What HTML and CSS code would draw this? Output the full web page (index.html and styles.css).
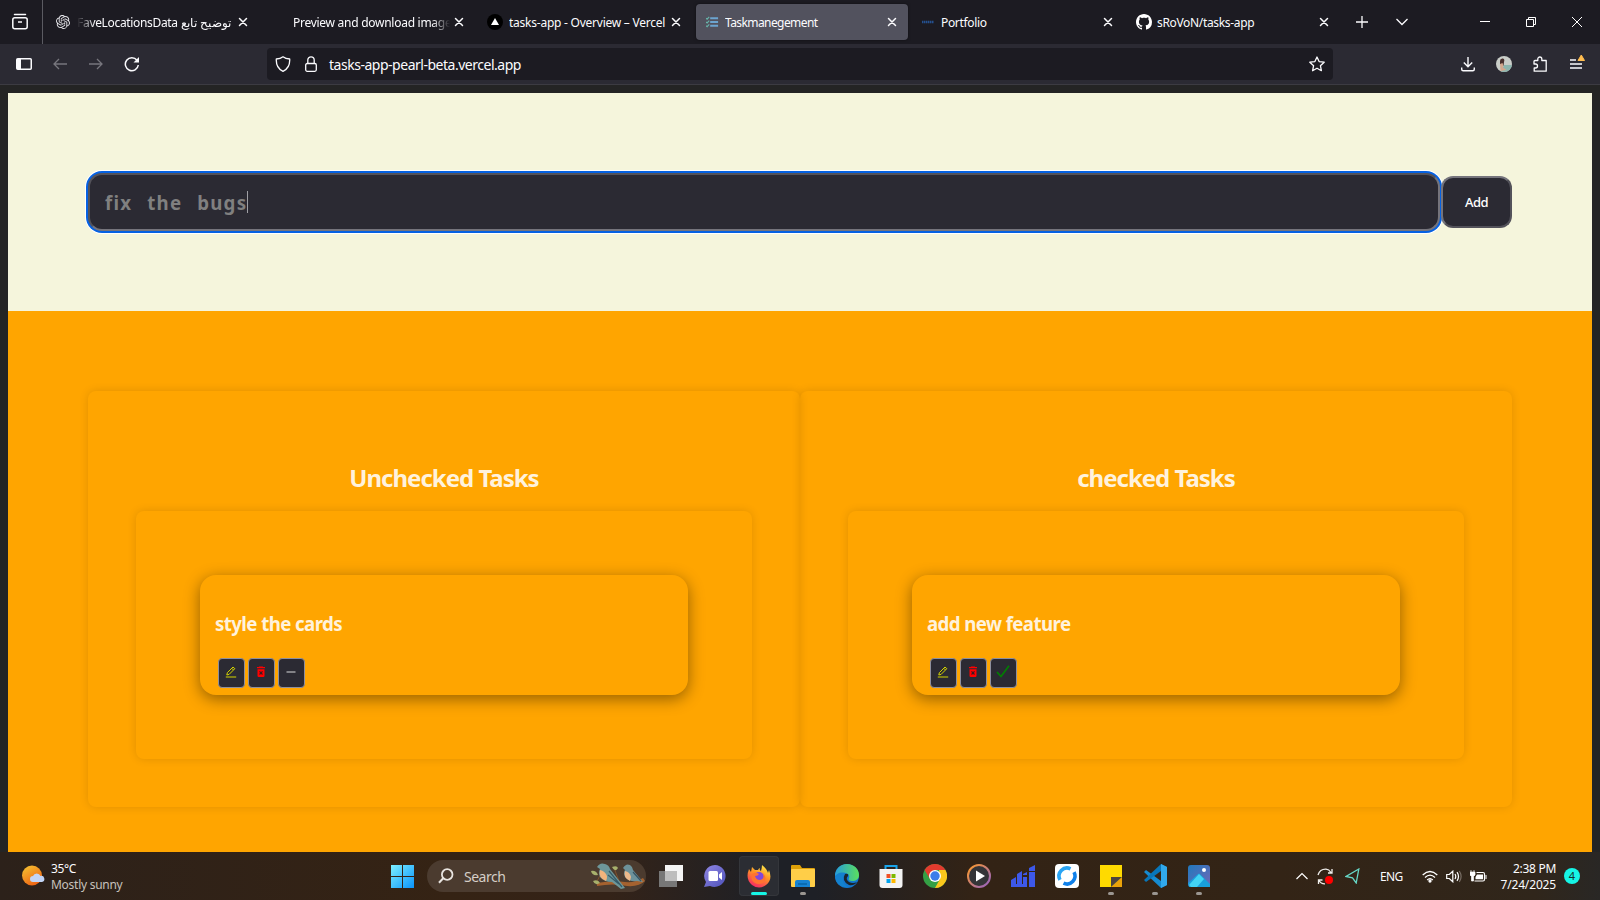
FILE: index.html
```html
<!DOCTYPE html>
<html lang="en">
<head>
<meta charset="utf-8">
<title>Taskmanegement</title>
<link rel="stylesheet" href="styles.css">
</head>
<body>
<svg class="defs" width="0" height="0">
  <symbol id="x" viewBox="0 0 16 16"><path d="M4.5 4.5l7 7M11.5 4.5l-7 7" stroke="#fbfbfe" stroke-width="1.5" stroke-linecap="round"/></symbol>
  <symbol id="pen" viewBox="0 0 12 12"><path d="M1.8 9l.6-2.4L8 1l1.8 1.7L4.1 8.4zM6.8 2.3l1.7 1.7M.8 11h10.4" fill="none" stroke="#d4d400" stroke-width="1"/></symbol>
  <symbol id="bin" viewBox="0 0 12 12"><path d="M4.3.5h3.4l.5.6H10v1.2H2V1.100h1.800zM2.500 3.200h7v6.600q0 1.200-1.200 1.200H3.700q-1.200 0-1.200-1.200z" fill="#f00"/><path d="M4.500 5.300l3 3.200M7.500 5.300l-3 3.200" stroke="#3a1a20" stroke-width="1.100"/></symbol>
</svg>

<header class="tabs">
  <div class="view"><svg width="18" height="18" viewBox="0 0 18 18" fill="none" stroke="#fbfbfe" stroke-width="1.500"><path d="M3.500 1.500h11" stroke-linecap="round"/><rect x="1.800" y="4.800" width="14.400" height="11" rx="2"/><path d="M7 9h4"/></svg></div>
  <div class="tab"><span class="fav"><svg width="14" height="14" viewBox="0 0 24 24"><path fill="#e8e8ec" d="M22.2819 9.8211a5.9847 5.9847 0 0 0-.5157-4.9108 6.0462 6.0462 0 0 0-6.5098-2.9A6.0651 6.0651 0 0 0 4.9807 4.1818a5.9847 5.9847 0 0 0-3.9977 2.9 6.0462 6.0462 0 0 0 .7427 7.0966 5.98 5.98 0 0 0 .511 4.9107 6.051 6.051 0 0 0 6.5146 2.9001A5.9847 5.9847 0 0 0 13.2599 24a6.0557 6.0557 0 0 0 5.7718-4.2058 5.9894 5.9894 0 0 0 3.9977-2.9001 6.0557 6.0557 0 0 0-.7475-7.0729zm-9.022 12.6081a4.4755 4.4755 0 0 1-2.8764-1.0408l.1419-.0804 4.7783-2.7582a.7948.7948 0 0 0 .3927-.6813v-6.7369l2.02 1.1686a.071.071 0 0 1 .038.052v5.5826a4.504 4.504 0 0 1-4.4945 4.4944zm-9.6607-4.1254a4.4708 4.4708 0 0 1-.5346-3.0137l.142.0852 4.783 2.7582a.7712.7712 0 0 0 .7806 0l5.8428-3.3685v2.3324a.0804.0804 0 0 1-.0332.0615L9.74 19.9502a4.4992 4.4992 0 0 1-6.1408-1.6464zM2.3408 7.8956a4.485 4.485 0 0 1 2.3655-1.9728V11.6a.7664.7664 0 0 0 .3879.6765l5.8144 3.3543-2.0201 1.1685a.0757.0757 0 0 1-.071 0l-4.8303-2.7865A4.504 4.504 0 0 1 2.3408 7.872zm16.5963 3.8558L13.1038 8.364 15.1192 7.2a.0757.0757 0 0 1 .071 0l4.8303 2.7913a4.4944 4.4944 0 0 1-.6765 8.1042v-5.6772a.79.79 0 0 0-.407-.667zm2.0107-3.0231l-.142-.0852-4.7735-2.7818a.7759.7759 0 0 0-.7854 0L9.409 9.2297V6.8974a.0662.0662 0 0 1 .0284-.0615l4.8303-2.7866a4.4992 4.4992 0 0 1 6.6802 4.66zM8.3065 12.863l-2.02-1.1638a.0804.0804 0 0 1-.038-.0567V6.0742a4.4992 4.4992 0 0 1 7.3757-3.4537l-.142.0805L8.704 5.459a.7948.7948 0 0 0-.3927.6813zm1.0976-2.3654l2.602-1.4998 2.6069 1.4998v2.9994l-2.5974 1.4997-2.6067-1.4997Z"/></svg></span><span class="name fade-left"><span dir="rtl">توضيح تابع FaveLocationsData</span></span><svg class="close near"><use href="#x"/></svg></div>
  <div class="tab"><span class="fav"></span><span class="name fade-right">Preview and download image</span><svg class="close near"><use href="#x"/></svg></div>
  <div class="tab"><span class="fav"><svg width="16" height="16" viewBox="0 0 16 16"><circle cx="8" cy="8" r="8"/><path d="M8 4l4 7H4z" fill="#fff"/></svg></span><span class="name wide">tasks-app - Overview – Vercel</span><svg class="close"><use href="#x"/></svg></div>
  <div class="tab active"><span class="fav late"><svg width="13" height="12" viewBox="0 0 14 12" fill="none" stroke-width="2"><path d="M4.500 2H13M4.500 6H13M4.500 10H13" stroke="#6ca4cf"/><path d="M0 2l1.200 1L3.500.5M0 6l1.200 1 2.300-2.500M0 10l1.200 1 2.300-2.500" stroke="#66b3a9" stroke-width="1.200"/></svg></span><span class="name tight">Taskmanegement</span><svg class="close"><use href="#x"/></svg></div>
  <div class="tab"><span class="fav late"><svg width="12" height="4" viewBox="0 0 12 4"><path d="M0 2h12" stroke="#24508f" stroke-width="2.500" stroke-dasharray="1.500 .5"/></svg></span><span class="name">Portfolio</span><svg class="close"><use href="#x"/></svg></div>
  <div class="tab"><span class="fav late"><svg width="16" height="16" viewBox="0 0 16 16"><path fill="#fff" d="M8 0C3.580 0 0 3.580 0 8c0 3.540 2.290 6.530 5.470 7.590.4.070.55-.17.55-.38 0-.19-.01-.82-.01-1.490-2.010.37-2.530-.49-2.690-.94-.09-.23-.48-.94-.82-1.130-.28-.15-.68-.52-.01-.53.63-.01 1.080.58 1.230.82.72 1.210 1.870.87 2.330.66.07-.52.28-.87.51-1.070-1.780-.2-3.640-.89-3.640-3.950 0-.87.31-1.590.82-2.150-.08-.2-.36-1.020.08-2.120 0 0 .67-.21 2.200.82.64-.18 1.320-.27 2-.27s1.360.09 2 .27c1.530-1.040 2.200-.82 2.200-.82.44 1.100.16 1.920.08 2.120.51.56.82 1.270.82 2.150 0 3.070-1.870 3.750-3.650 3.950.29.25.54.73.54 1.480 0 1.070-.01 1.930-.01 2.200 0 .21.15.46.55.38A8.010 8.010 0 0 0 16 8c0-4.420-3.580-8-8-8z"/></svg></span><span class="name">sRoVoN/tasks-app</span><svg class="close"><use href="#x"/></svg></div>
  <div class="tab-tools"><span><svg width="14" height="14" viewBox="0 0 14 14"><path d="M7 1v12M1 7h12" stroke="#fbfbfe" stroke-width="1.300"/></svg></span><span><svg width="14" height="14" viewBox="0 0 14 14" fill="none"><path d="M1.500 4L7 9.500 12.500 4" stroke="#fbfbfe" stroke-width="1.300"/></svg></span></div>
  <div class="win"><span><svg width="10" height="10"><path d="M0 4.500h10" stroke="#fff"/></svg></span><span><svg width="10" height="10" viewBox="0 0 10 10" fill="none" stroke="#fff"><path d="M.5 2.500h7v7h-7zM2.500 2.500v-2h7v7h-2"/></svg></span><span><svg width="10" height="10"><path d="M0 0l10 10M10 0L0 10" stroke="#fff"/></svg></span></div>
</header>

<nav class="toolbar">
  <span class="tool"><svg width="16" height="12" viewBox="0 0 16 12"><rect x=".75" y=".75" width="14.500" height="10.500" rx="1" fill="none" stroke="#fbfbfe" stroke-width="1.500"/><path d="M1 1h4v10H1z" fill="#fbfbfe"/></svg></span>
  <span class="tool"><svg width="14" height="12" viewBox="0 0 14 12" fill="none" stroke="#77767d" stroke-width="1.300"><path d="M14 6H1M6 1L1 6l5 5"/></svg></span>
  <span class="tool"><svg width="14" height="12" viewBox="0 0 14 12" fill="none" stroke="#77767d" stroke-width="1.300"><path d="M0 6h13M8 1l5 5-5 5"/></svg></span>
  <span class="tool"><svg width="16" height="16" viewBox="0 0 16 16" fill="none"><path d="M13 4.200A6.500 6.500 0 1 0 14.300 9" stroke="#fbfbfe" stroke-width="1.500"/><path d="M15 1v5.500H9.500z" fill="#fbfbfe"/></svg></span>
  <div class="url">
    <svg class="shield" width="16" height="16" viewBox="0 0 16 16" fill="none" stroke="#fbfbfe" stroke-width="1.300"><path d="M8 .8C6.500 2 4 2.900 1.300 3 1 8.500 3 13 8 15.300 13 13 15 8.500 14.700 3 12 2.900 9.500 2 8 .8z" stroke-linejoin="round"/></svg>
    <svg class="lock" width="12" height="16" viewBox="0 0 12 16" fill="none" stroke="#fbfbfe" stroke-width="1.300"><rect x=".7" y="7.500" width="10.600" height="7.800" rx="1.500"/><path d="M2.800 7.500V4a3.200 3.200 0 0 1 6.400 0v3.500"/></svg>
    <span class="address">tasks-app-pearl-beta.vercel.app</span>
    <svg class="star" width="16" height="16" viewBox="0 0 16 16" fill="none" stroke="#fbfbfe" stroke-width="1.300" stroke-linejoin="round"><path d="M8 1l2.100 4.600 5.100.6-3.800 3.500 1 5L8 12.200l-4.400 2.500 1-5L.8 6.200l5.100-.6z"/></svg>
  </div>
  <div class="right-tools">
    <span class="tool"><svg width="14" height="16" viewBox="0 0 14 16" fill="none" stroke="#fbfbfe" stroke-width="1.400"><path d="M7 1v9.500M2.800 6.500L7 10.700l4.200-4.200M.7 11.500v1.700q0 1.500 1.500 1.500h9.600q1.500 0 1.500-1.500v-1.700"/></svg></span>
    <span class="tool"><svg width="16" height="16" viewBox="0 0 16 16"><clipPath id="av"><circle cx="8" cy="8" r="8"/></clipPath><g clip-path="url(#av)"><path d="M0 0h16v16H0z" fill="#c9cdc8"/><path d="M8 9h8v7H5z" fill="#8db5ae"/><path d="M4 5q0-3 3-2.500Q9 3 8 6L7.500 10 4 8z" fill="#49302d"/><path d="M4 8l2.500-1 1 3-1 1 4 3-6 1z" fill="#d3a78d"/></g></svg></span>
    <span class="tool"><svg width="14" height="16" viewBox="0 0 14 16" fill="none" stroke="#fbfbfe" stroke-width="1.300" stroke-linejoin="round"><path d="M4.800 4.500V3a2 2 0 0 1 4 0v1.500h4.400v10.700H1.200V12h1.300a2 2 0 0 0 0-4H1V5.500q0-1 1-1z"/></svg></span>
    <span class="tool menu"><svg width="16" height="16" viewBox="0 0 16 16"><path d="M1 6h6M1 10h12M1 14h12" stroke="#fbfbfe" stroke-width="1.300"/><path d="M12.300 1l3.200 5.500H9z" fill="#ffbd4f" stroke="#ffbd4f" stroke-linejoin="round"/></svg></span>
  </div>
</nav>

<main class="page">
  <section class="form">
    <div class="field"><span>fix the bugs</span><i class="caret"></i></div>
    <button class="add">Add</button>
  </section>
  <section class="board">
    <article class="column">
      <h2>Unchecked Tasks</h2>
      <div class="list"><div class="card"><h3>style the cards</h3><div class="actions">
        <button><svg width="12" height="12"><use href="#pen"/></svg></button><button><svg width="12" height="12"><use href="#bin"/></svg></button><button><svg width="12" height="12" viewBox="0 0 12 12"><path d="M1.500 6h9" stroke="#a0a0a5" stroke-width="1.500"/></svg></button>
      </div></div></div>
    </article>
    <article class="column">
      <h2>checked Tasks</h2>
      <div class="list"><div class="card"><h3>add new feature</h3><div class="actions">
        <button><svg width="12" height="12"><use href="#pen"/></svg></button><button><svg width="12" height="12"><use href="#bin"/></svg></button><button><svg width="14" height="13" viewBox="0 0 14 13" fill="none"><path d="M1 7l4 4.500L13 .8" stroke="#008000" stroke-width="1.600"/></svg></button>
      </div></div></div>
    </article>
  </section>
</main>

<footer class="taskbar">
  <svg class="sun" width="24" height="22" viewBox="0 0 24 22"><defs><linearGradient id="sg" x2=".6" y2="1"><stop stop-color="#f6c833"/><stop offset="1" stop-color="#ee6414"/></linearGradient></defs><circle cx="11" cy="10.500" r="10" fill="url(#sg)"/><path d="M12 17a3 3 0 0 1 0-6 4 4 0 0 1 7.500 0A3 3 0 0 1 21 17z" fill="#c3d5f6"/></svg>
  <div class="weather"><b>35°C</b><span>Mostly sunny</span></div>
  <svg class="start" width="23" height="23" viewBox="0 0 23 23"><defs><linearGradient id="wg" x2="1" y2="1"><stop stop-color="#7df0ff"/><stop offset="1" stop-color="#0a93fa"/></linearGradient></defs><path d="M0 0h11v11H0zM12 0h11v11H12zM0 12h11v11H0zM12 12h11v11H12z" fill="url(#wg)"/></svg>
  <div class="search">
    <svg width="16" height="16" viewBox="0 0 16 16" fill="none" stroke="#e8e4e0" stroke-width="1.800"><circle cx="9.200" cy="6.500" r="5.300"/><path d="M5.200 10.300L1 14.800" stroke-width="2"/></svg>
    <span>Search</span>
    <svg class="birds" width="54" height="27" viewBox="0 0 54 27"><path d="M6 20q16-3 28-1 10 1 18-4l2 3q-6 6-18 5-14-3-30 0z" fill="#a5622f"/><path d="M5 20l6-11M28 18l-5-13" stroke="#80502b"/><path d="M0 8q5-1 7 4-6 1-7-4zM2 18q5-2 7 2-5 3-7-2zM21 4q5-2 6 1-3 5-6-1z" fill="#a7b06c"/><path d="M6 4q3-5 8-3 4 1 5 5l15 19-4 1-9-7q-8 0-12-5-2-5 0-8z" fill="#6d979a"/><path d="M9 7q5 1 7 6 0 4-1 5-8-3-6-11z" fill="#f2b47c"/><path d="M18 8l13 16M17 12l11 9" stroke="#355b6a" stroke-width="1.200"/><path d="M32 5q3-5 7-3 3 2 3 5l10 12-6-1q-8 1-12-4-2-4 0-7z" fill="#6d929a"/><path d="M34 8q5 1 6 6l-1 4q-7-3-5-10z" fill="#edb98b"/><path d="M42 9l8 9" stroke="#345363" stroke-width="1.200"/></svg>
  </div>
  <div class="apps">
    <span><svg width="24" height="22" viewBox="0 0 24 22"><path d="M6 0h18v16H6z" fill="#f4f4f4"/><path d="M0 6h18v16H0z" fill="#777"/><path d="M6 6h12v10H6z" fill="#bdbdbd"/></svg></span>
    <span><svg width="24" height="24" viewBox="0 0 24 24"><defs><linearGradient id="cg" x2="1" y2="1"><stop stop-color="#9187e4"/><stop offset="1" stop-color="#4d51b9"/></linearGradient></defs><path d="M12 1a11 11 0 1 1-5 21l-6 1 2-5A11 11 0 0 1 12 1z" fill="url(#cg)"/><rect x="5.500" y="7" width="9.500" height="10" rx="1.500" fill="#fff"/><path d="M16 10.500l3-2.500v8l-3-2.500z" fill="#fff"/></svg></span>
    <span class="current run"><svg width="24" height="24" viewBox="0 0 24 24"><defs><linearGradient id="fg" x1=".8" x2=".3" y2="1"><stop stop-color="#fff04a"/><stop offset=".45" stop-color="#ff9324"/><stop offset="1" stop-color="#f52567"/></linearGradient></defs><path d="M5 3l3 3h3q1-2 2-2-1 2 1 3 1-4 1-6 5 4 6 8l1-3q4 10-3 15-7 5-14 0-7-6-3-16l2 3z" fill="url(#fg)"/><circle cx="12" cy="13" r="5" fill="#8048db"/><path d="M4 11q4-4 8-1-1 2-4 2 1 4 5 4 5-1 3-7 5 6 0 10-7 3-11-3z" fill="#ff7330"/></svg></span>
    <span class="run"><svg width="24" height="22" viewBox="0 0 24 22"><path d="M0 1q0-1 1-1h8l2 3h12q1 0 1 1v8H0z" fill="#dda008"/><rect y="4" width="24" height="18" rx="1" fill="#ffce48"/><path d="M4 22v-5q0-2 2-2h11q2 0 2 2v5z" fill="#1682d2"/><path d="M7 19h9" stroke="#0764a9" stroke-width="1.500"/></svg></span>
    <span><svg width="24" height="24" viewBox="0 0 24 24"><defs><linearGradient id="eg"><stop stop-color="#269cdb"/><stop offset="1" stop-color="#5bdf5c"/></linearGradient></defs><circle cx="12" cy="12" r="12" fill="#1277cf"/><path d="M0 12C0 5 5 0 12 0s12 5 12 11c0 4-3 6-7 6-3 0-4-1-3-3 2-5-7-8-14-2z" fill="url(#eg)"/><path d="M10 10q-4 7 4 11 5 1 8-3-4 2-8 0-4-3-1-6 1-3-3-2z" fill="#1b252e"/><path d="M10 9q-5 8 2 14h-2Q1 22 0 13q3-6 10-4z" fill="#1481ce"/></svg></span>
    <span><svg width="24" height="24" viewBox="0 0 24 24"><path d="M6.500 5V2h11v3" fill="none" stroke="#18a4ea" stroke-width="2"/><path d="M.5 5h23v16q0 3-3 3h-17q-3 0-3-3z" fill="#f3f3f3"/><path d="M7.500 10h4v4h-4z" fill="#f05125"/><path d="M12.500 10h4v4h-4z" fill="#7db900"/><path d="M7.500 15h4v4h-4z" fill="#00a3ee"/><path d="M12.500 15h4v4h-4z" fill="#ffb800"/></svg></span>
    <span><svg width="24" height="24" viewBox="0 0 24 24"><circle cx="12" cy="12" r="12" fill="#34a045"/><path d="M1.600 6A12 12 0 0 1 22.400 6H12l-5 9z" fill="#e33b2e"/><path d="M22.400 6A12 12 0 0 1 12 24l5-9-1-9z" fill="#fbc71c"/><circle cx="12" cy="12" r="6" fill="#fff"/><circle cx="12" cy="12" r="4.700" fill="#3b7de9"/></svg></span>
    <span><svg width="24" height="24" viewBox="0 0 24 24"><defs><linearGradient id="mg" x2="1" y2="1"><stop stop-color="#ff9b27"/><stop offset="1" stop-color="#9260c7"/></linearGradient></defs><circle cx="12" cy="12" r="11" fill="#343437" stroke="url(#mg)" stroke-width="2"/><path d="M9 6.500l9 5.500-9 5.500z" fill="#fff"/></svg></span>
    <span><svg width="24" height="22" viewBox="0 0 24 22"><path d="M0 15l5-3v7h1V9l5-3v13h1v-7h4v10H0zM18 3l6-3v6h-6zM12 9l4-2v3h-4zM18 7h6v15h-6z" fill="#3d58e9"/></svg></span>
    <span><svg width="24" height="24" viewBox="0 0 24 24"><rect width="24" height="24" rx="4" fill="#fff"/><g fill="none" stroke-width="3.600"><path d="M15.500 4.800A8 8 0 0 0 5 15.800" stroke="#2aa5f5"/><path d="M8.500 19.200A8 8 0 0 0 19 8.200" stroke="#0f80ea"/></g></svg></span>
    <span class="run"><svg width="22" height="22" viewBox="0 0 22 22"><path d="M0 0h22v22H0z" fill="#ffda00"/><path d="M22 12v10H11z" fill="#eba30a"/><path d="M11 12h11L11 22z" fill="#4c443d"/></svg></span>
    <span class="run"><svg width="24" height="24" viewBox="0 0 24 24"><path d="M18 0l6 3v18l-6 3L1 8l2-2 15 11z" fill="#168bd1"/><path d="M18 0v7L3 18l-2-2z" fill="#0876b9"/><path d="M18 0l6 3v18l-6 3z" fill="#31a9ec"/></svg></span>
    <span class="run"><svg width="22" height="22" viewBox="0 0 22 22"><defs><linearGradient id="pg" x2="1" y2="1"><stop stop-color="#2179bd"/><stop offset="1" stop-color="#7166b6"/></linearGradient></defs><rect width="22" height="22" rx="3" fill="url(#pg)"/><path d="M0 18L10 9q1-1 2 0l10 10v3H1z" fill="#189fdb"/><path d="M1 20L11 9l5 5-7 8H3z" fill="#43d3f4"/><circle cx="16" cy="5" r="2" fill="#fff"/></svg></span>
  </div>
  <div class="tray">
    <span class="chev"><svg width="12" height="8"><path d="M.5 7L6 1.500 11.500 7" fill="none" stroke="#fff" stroke-width="1.200"/></svg></span>
    <span class="sync"><svg width="17" height="17" viewBox="0 0 17 17" fill="none" stroke="#f0eeec" stroke-width="1.300"><path d="M1 7Q3 1 9 1.200q3 .2 5 3.300M15 1v4h-4M1.500 16v-4h4M2 12.500Q4 16 8 15.800"/><circle cx="12" cy="12" r="4" fill="red" stroke="none"/></svg></span>
    <span class="plane"><svg width="15" height="16" viewBox="0 0 15 16" fill="none" stroke="#67d9c8" stroke-width="1.300"><path d="M13.800 1L1 8.500l6.500 1.300 3.700 5.200z"/></svg></span>
    <span class="lang">ENG</span>
    <span class="wifi"><svg width="16" height="13" viewBox="0 0 16 13" fill="none" stroke="#fff" stroke-width="1.300"><path d="M.7 5Q8-2 15.300 5M3 7.500q5-4.800 10 0M5.200 10Q8 7.300 10.800 10"/><circle cx="8" cy="11" r="1" fill="#fff"/></svg></span>
    <span class="vol"><svg width="16" height="13" viewBox="0 0 16 13" fill="none" stroke="#fff" stroke-width="1.200"><path d="M.7 4.500h2.600l3.500-3.300v10.600L3.300 8.500H.7zM9 4q1.500 2.500 0 5M11 2.200q3 4.300 0 8.600"/><path d="M13.300 1q3.600 5.500 0 11" stroke="#786e65"/></svg></span>
    <span class="bat"><svg width="17" height="13" viewBox="0 0 17 13"><path d="M0 2h5v3L3.500 6.500V11h-2V6.500L0 5zM1 0v2M4 0v2" fill="#fff" stroke="#fff" stroke-width=".7"/><path d="M6.500 2.500H13q1.500 0 1.500 1.500v5.500q0 1.500-1.500 1.500H4.500" fill="none" stroke="#fff" stroke-width="1.200"/><path d="M7 4.500h6v4.700H5.500V7zM15.500 5h1v4h-1z" fill="#fff"/></svg></span>
    <div class="clock"><span>2:38 PM</span><span class="date">7/24/2025</span></div>
    <span class="badge">4</span>
  </div>
</footer>
</body>
</html>
```
FILE: styles.css
```css
* { box-sizing: border-box; }
body { margin: 0; width: 1600px; height: 900px; overflow: hidden; background: #242424; font-family: "Noto Sans", "Open Sans", sans-serif; font-size: 12px; color: #fbfbfe; display: flex; flex-direction: column; white-space: nowrap; }
svg { display: block; flex: none; }
.defs { position: absolute; }
button { font-family: inherit; padding: 0; margin: 0; }

.tabs { height: 44px; flex: none; background: #1c1b22; display: flex; }
.view { width: 43px; border-right: 1px solid #5b5b62; display: flex; align-items: center; padding-left: 11px; margin-right: 5px; }
.tab { width: 212px; height: 36px; margin: 4px 4px 0 0; padding-left: 7px; display: flex; align-items: center; border-radius: 4px; }
.tab.active { background: #52525e; box-shadow: 0 0 3px rgba(0,0,0,.5); }
.fav { width: 16px; height: 16px; margin-right: 6px; display: flex; align-items: center; justify-content: center; }
.fav.late { margin: 0 5px 0 1px; }
.name { width: 157px; overflow: hidden; letter-spacing: -.33px; line-height: 20px; padding-top: 1px; }
.name.wide { letter-spacing: -.24px; }
.name.tight { letter-spacing: -.58px; }
.fade-left { width: 154px; margin-right: 3px; display: flex; justify-content: flex-end; mask-image: linear-gradient(90deg, transparent, #000 18px); }
.fade-right { letter-spacing: -.27px; mask-image: linear-gradient(270deg, transparent, #000 18px); }
.close { width: 16px; height: 16px; margin-left: 2px; }
.close.near { margin-left: 1px; }
.tab-tools { display: flex; }
.tab-tools span { width: 36px; margin-right: 4px; display: flex; align-items: center; justify-content: center; }
.win { display: flex; margin-left: auto; }
.win span { width: 46px; display: flex; align-items: center; justify-content: center; }

.toolbar { height: 41px; flex: none; background: #2b2a33; border-bottom: 1px solid #3c3b42; padding-left: 6px; display: flex; align-items: center; }
.tool { width: 36px; height: 40px; display: flex; align-items: center; justify-content: center; }
.url { width: 1066px; height: 32px; margin-left: 117px; border-radius: 4px; background: #1c1b22; display: flex; align-items: center; padding: 0 8px; }
.lock { margin-left: 14px; }
.address { font-size: 14px; letter-spacing: -.48px; margin-left: 12px; padding-top: 1px; }
.star { margin-left: auto; }
.right-tools { display: flex; margin-left: 117px; }
.menu { padding-bottom: 4px; padding-left: 1px; }

.page { margin: 8px 8px 0; height: 759px; flex: none; background: orange; }
.form { height: 218px; background: #f5f5dc; padding: 0 80px; display: flex; align-items: center; }
.field { width: 1352px; height: 58px; border: 2px solid; border-color: #53525a #75747c #75747c #53525a; border-radius: 14px; background: #2b2a33; box-shadow: 0 0 0 2px #0561e2, 0 0 0 3px #fff; padding-left: 15px; display: flex; align-items: center; color: #808080; font-size: 18.700px; font-weight: 700; letter-spacing: 1.250px; word-spacing: 8.700px; }
.caret { width: 1px; height: 22px; background: #a0a0a5; }
.add { width: 71px; height: 52px; margin-left: 1px; position: relative; border: 2px solid; border-color: #75747c #53525a #53525a #75747c; border-radius: 12px; background: #2b2a33; color: #fff; font-size: 13px; font-weight: 500; letter-spacing: -.5px; }
.board { height: 541px; padding: 80px 80px 0; display: flex; align-items: flex-start; }
.column { width: 712px; height: 416px; padding: 71px 48px 48px; border-radius: 8px; box-shadow: 0 0 10px rgba(0,0,0,.12); }
h2 { margin: 0 0 17px; font-size: 24px; line-height: 32px; font-weight: 700; text-align: center; color: #fff2dc; letter-spacing: -1px; }
.list { height: 248px; padding: 64px; border-radius: 8px; box-shadow: 0 0 10px rgba(0,0,0,.12); }
.card { height: 120px; padding: 36px 15px 0; border-radius: 16px; background: orange; box-shadow: 0 4px 16px rgba(0,0,0,.42); }
h3 { margin: 0; font-size: 18.700px; line-height: 26px; color: #fff2dc; letter-spacing: -.6px; }
.actions { display: flex; gap: 3px; padding: 21px 0 0 3px; }
.actions button { width: 27px; height: 30px; background: #2b2a33; border: 1px solid #8f8f9d; border-radius: 4px; display: flex; align-items: center; justify-content: center; padding: 0 1px 3px 0; }

.taskbar { height: 48px; flex: none; display: flex; align-items: center; background: linear-gradient(90deg, #2c211a, #352314 28%, #342318 38%, #1e2026 48%, #1e2026 51%, #332315 61%, #332416 80%, #30261b 96%, #292725); }
.sun { margin-left: 21px; }
.weather { width: 100px; margin: 2px 0 0 6px; line-height: 16px; display: flex; flex-direction: column; }
.weather b { font-weight: 400; letter-spacing: -.4px; }
.weather span { color: #c7c1bc; letter-spacing: -.27px; }
.start { margin-left: 240px; }
.search { width: 219px; height: 32px; margin-left: 13px; border-radius: 16px; background: #4b3b2f; display: flex; align-items: center; padding-left: 11px; color: #d5cec7; font-size: 14px; }
.search span { width: 126px; margin-left: 10px; letter-spacing: -.5px; }
.birds { margin-left: 1px; }
.apps { display: flex; margin-left: 5px; }
.apps span { width: 40px; height: 40px; margin-right: 4px; display: flex; align-items: center; justify-content: center; position: relative; border-radius: 4px; }
.apps .current { background: #2b2d33; box-shadow: inset 0 0 0 1px #34363b; }
.run::after { content: ""; position: absolute; bottom: 1px; left: 17px; width: 6px; height: 3px; border-radius: 2px; background: #9b9691; }
.apps .current::after { left: 12px; width: 16px; background: #16f5e6; }
.tray { margin-left: auto; width: 309px; display: flex; align-items: center; }
.chev { margin-left: 5px; }
.sync { margin-left: 9px; }
.plane { margin-left: 11px; }
.lang { width: 26px; margin-left: 20px; letter-spacing: -.7px; padding-top: 1px; }
.wifi { margin-left: 16px; }
.vol { margin-left: 8px; }
.bat { margin-left: 8px; }
.clock { width: 64px; margin: 1px 0 0 5px; display: flex; flex-direction: column; text-align: right; line-height: 16px; letter-spacing: -.3px; }
.clock .date { letter-spacing: -.16px; }
.badge { width: 16px; height: 16px; margin-left: 8px; border-radius: 50%; background: #16f5e6; color: #17302e; font-size: 11px; line-height: 16px; text-align: center; }
```
